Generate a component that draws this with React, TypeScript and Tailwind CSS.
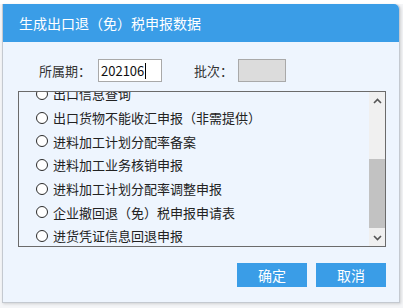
import { useState } from 'react';

const items = [
  '出口信息查询',
  '出口货物不能收汇申报（非需提供）',
  '进料加工计划分配率备案',
  '进料加工业务核销申报',
  '进料加工计划分配率调整申报',
  '企业撤回退（免）税申报申请表',
  '进货凭证信息回退申报',
];

const font = { fontFamily: '"Microsoft YaHei", "Noto Sans CJK SC", "Noto Sans", sans-serif' };

function Chevron({ up }: { up?: boolean }) {
  return (
    <svg width="9" height="6" viewBox="0 0 9 6">
      <path
        d={up ? 'M1 5 L4.5 1.5 L8 5' : 'M1 1 L4.5 4.5 L8 1'}
        fill="none"
        stroke="#555"
        strokeWidth="1.6"
      />
    </svg>
  );
}

export default function App() {
  const [selected, setSelected] = useState<number | null>(null);

  return (
    <div className="w-[403px] h-[308px] bg-[#f4f5f7] overflow-hidden" style={font}>
      <div className="h-[4px] bg-white" />
      <div className="ml-[2px] w-[398px] h-[299px] flex flex-col bg-[#eef5fe] border border-[#c4c9d0] border-t-0 rounded-tr-[5px] shadow-[1px_1px_3px_rgba(0,0,0,0.15)]">
        {/* en-tête */}
        <div className="h-[38px] bg-[#3a9de7] rounded-tr-[5px] flex items-center pl-[16px] text-white text-[14px]">
          生成出口退（免）税申报数据
        </div>

        <div className="flex flex-col px-[15px] pt-[17px]">
          {/* période et lot */}
          <div className="flex items-center h-[23px] pl-[21px] text-[13px] text-[#333]">
            <span className="w-[59px]">所属期：</span>
            <div className="w-[64px] h-[23px] bg-white border border-[#a9a9a9] flex items-center pl-[2px] text-[13px] text-[#111]">
              202106
              <span className="w-[1px] h-[16px] bg-black ml-[1px]" />
            </div>
            <span className="ml-[32px] w-[44px]">批次：</span>
            <div className="w-[48px] h-[23px] bg-[#dcdcdc] border border-[#a9a9a9]" />
          </div>

          {/* liste */}
          <div className="mt-[9px] w-[368px] h-[156px] border border-[#6b6b6b] bg-[#eef5fe] flex overflow-hidden">
            <div className="flex-1 overflow-hidden">
              <div className="-mt-[10px] flex flex-col">
                {items.map((label, i) => (
                  <div
                    key={label}
                    className="h-[23.7px] flex items-center pl-[17px] text-[13px] text-[#222] cursor-pointer"
                    onClick={() => setSelected(i)}
                  >
                    <span className="w-[12px] h-[12px] rounded-full border-[1.5px] border-[#2b2b2b] bg-white flex items-center justify-center">
                      {selected === i && <span className="w-[6px] h-[6px] rounded-full bg-[#2b2b2b]" />}
                    </span>
                    <span className="ml-[5px] leading-none">{label}</span>
                  </div>
                ))}
              </div>
            </div>
            {/* barre de défilement */}
            <div className="w-[16px] bg-[#f0f0f0] flex flex-col">
              <div className="h-[17px] flex items-center justify-center">
                <Chevron up />
              </div>
              <div className="h-[50px]" />
              <div className="h-[69px] bg-[#c2c2c2]" />
              <div className="flex-1" />
              <div className="h-[17px] flex items-center justify-center">
                <Chevron />
              </div>
            </div>
          </div>

          {/* boutons */}
          <div className="mt-[16px] w-[368px] flex justify-end gap-[9px]">
            <button className="w-[70px] h-[24px] bg-[#3a9de7] text-white text-[14px]">确定</button>
            <button className="w-[70px] h-[24px] bg-[#3a9de7] text-white text-[14px]">取消</button>
          </div>
        </div>
      </div>
    </div>
  );
}
